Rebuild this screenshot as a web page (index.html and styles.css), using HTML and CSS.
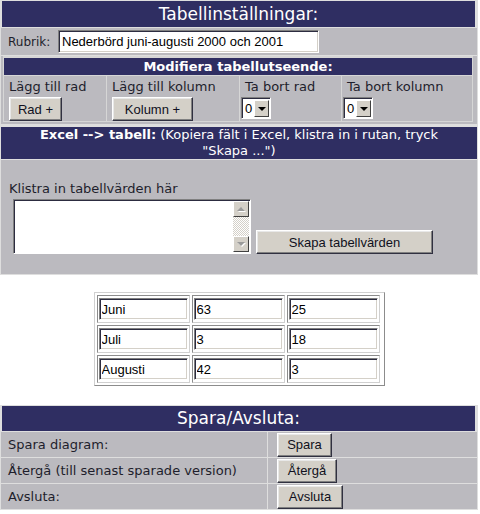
FILE: index.html
```html
<!DOCTYPE html>
<html lang="sv">
<head>
<meta charset="utf-8">
<title>Tabellinställningar</title>
<link rel="stylesheet" href="styles.css">
</head>
<body>
<div class="page">
  <div class="panel">
    <div class="bar bar-title">Tabellinställningar:</div>
    <div class="row row-rubrik">
      <span class="lbl-small">Rubrik:</span>
      <input class="txt txt-rubrik" type="text" value="Nederbörd juni-augusti 2000 och 2001">
    </div>
    <div class="row row-mod">
      <div class="mod">
        <div class="bar bar-sub">Modifiera tabellutseende:</div>
        <div class="mod-cells">
          <div class="mcell c1">
            <div class="mlabel">Lägg till rad</div>
            <button class="btn btn-rad">Rad +</button>
          </div>
          <div class="mcell c2">
            <div class="mlabel">Lägg till kolumn</div>
            <button class="btn btn-kol">Kolumn +</button>
          </div>
          <div class="mcell c3">
            <div class="mlabel ind">Ta bort rad</div>
            <span class="sel"><span class="sel-val">0</span><span class="sel-btn"><span class="tri"></span></span></span>
          </div>
          <div class="mcell c4">
            <div class="mlabel ind">Ta bort kolumn</div>
            <span class="sel"><span class="sel-val">0</span><span class="sel-btn"><span class="tri"></span></span></span>
          </div>
        </div>
      </div>
    </div>
    <div class="bar bar-excel"><b>Excel --&gt; tabell:</b> (Kopiera fält i Excel, klistra in i rutan, tryck "Skapa ...")</div>
    <div class="row row-paste">
      <div class="paste-label">Klistra in tabellvärden här</div>
      <div class="paste-line">
        <div class="ta">
          <textarea class="ta-area"></textarea>
          <div class="sb">
            <span class="sb-btn"><span class="tri-up"></span></span>
            <span class="sb-track"></span>
            <span class="sb-btn"><span class="tri-down"></span></span>
          </div>
        </div>
        <button class="btn btn-skapa">Skapa tabellvärden</button>
      </div>
    </div>
  </div>

  <div class="data">
    <div class="dcell"><input class="txt dtxt" type="text" value="Juni"></div>
    <div class="dcell"><input class="txt dtxt" type="text" value="63"></div>
    <div class="dcell"><input class="txt dtxt" type="text" value="25"></div>
    <div class="dcell"><input class="txt dtxt" type="text" value="Juli"></div>
    <div class="dcell"><input class="txt dtxt" type="text" value="3"></div>
    <div class="dcell"><input class="txt dtxt" type="text" value="18"></div>
    <div class="dcell"><input class="txt dtxt" type="text" value="Augusti"></div>
    <div class="dcell"><input class="txt dtxt" type="text" value="42"></div>
    <div class="dcell"><input class="txt dtxt" type="text" value="3"></div>
  </div>

  <div class="panel panel-save">
    <div class="bar bar-title bar-save">Spara/Avsluta:</div>
    <div class="save-grid">
      <div class="scell">Spara diagram:</div>
      <div class="scell sbtn"><button class="btn btn-spara">Spara</button></div>
      <div class="scell">Återgå (till senast sparade version)</div>
      <div class="scell sbtn"><button class="btn btn-atergå">Återgå</button></div>
      <div class="scell">Avsluta:</div>
      <div class="scell sbtn"><button class="btn btn-avsluta">Avsluta</button></div>
    </div>
  </div>
</div>
</body>
</html>
```

FILE: styles.css
```css
html, body {
  margin: 0;
  padding: 0;
  background: #ffffff;
}
body {
  font-family: "DejaVu Sans", Verdana, sans-serif;
  font-size: 13px;
  color: #1e1e2c;
}
.page {
  width: 478px;
}
.panel {
  background: #dedede;
  padding: 1px;
  display: flex;
  flex-direction: column;
  gap: 1px;
}
.bar {
  background: #2f2e62;
  color: #ffffff;
  text-align: center;
}
.bar-title {
  height: 26px;
  line-height: 26px;
  font-size: 17px;
  margin: 0 2px 0 1px;
}
.row {
  background: #bbbabf;
}
.row-rubrik {
  height: 27px;
  display: flex;
  align-items: center;
  padding-left: 7px;
}
.lbl-small {
  font-size: 12px;
  width: 50px;
}
.txt {
  font-family: "Liberation Sans", Arial, sans-serif;
  font-size: 13px;
  color: #000;
  background: #fff;
  box-sizing: border-box;
  border: 1px solid;
  border-color: #808080 #ffffff #ffffff #808080;
  box-shadow: inset 1px 1px #2c2c40, inset -1px -1px #d4d0c8;
  padding: 0 3px;
  margin: 0;
  outline: none;
}
.txt-rubrik {
  width: 261px;
  height: 23px;
}
.row-mod {
  padding: 0 2px 2px 2px;
}
.mod {
  background: #d6d6d6;
  padding: 2px 1px 1px 1px;
  display: flex;
  flex-direction: column;
  gap: 1px;
  width: 470px;
  box-sizing: border-box;
}
.bar-sub {
  height: 17px;
  line-height: 17px;
  font-weight: bold;
  font-size: 13px;
}
.mod-cells {
  display: grid;
  grid-template-columns: 102px 132px 101px 130px;
  gap: 1px;
}
.mcell {
  background: #bbbabf;
  height: 45px;
  padding-left: 5px;
  box-sizing: border-box;
}
.c3, .c4 {
  padding-left: 1px;
}
.mlabel {
  height: 20px;
  line-height: 22px;
  margin-bottom: 1px;
}
.mlabel.ind {
  padding-left: 4px;
}
.btn {
  font-family: "Liberation Sans", Arial, sans-serif;
  font-size: 13px;
  color: #101020;
  background: #d4d0c8;
  box-sizing: border-box;
  height: 24px;
  padding: 0;
  margin: 0;
  border: 1px solid;
  border-color: #ffffff #303040 #303040 #ffffff;
  box-shadow: inset -1px -1px #808080, inset 1px 1px #e8e8e8;
  border-radius: 0;
}
.btn-rad { width: 53px; }
.btn-kol { width: 81px; }
.sel {
  display: inline-flex;
  box-sizing: border-box;
  width: 30px;
  height: 22px;
  background: #fff;
  border: 1px solid;
  border-color: #808080 #ffffff #ffffff #808080;
  box-shadow: inset 1px 1px #2c2c40;
  padding: 2px 1px 1px 2px;
  font-family: "Liberation Sans", Arial, sans-serif;
  font-size: 13px;
  color: #000;
}
.sel-val {
  flex: 1;
  line-height: 17px;
  padding-left: 1px;
}
.sel-btn {
  width: 15px;
  height: 17px;
  box-sizing: border-box;
  background: #d4d0c8;
  border: 1px solid;
  border-color: #ffffff #404040 #404040 #ffffff;
  display: flex;
  align-items: center;
  justify-content: center;
}
.tri {
  width: 0;
  height: 0;
  border-left: 4px solid transparent;
  border-right: 4px solid transparent;
  border-top: 4px solid #000;
}
.bar-excel {
  margin-top: 2px;
  height: 32px;
  line-height: 16px;
  font-size: 13px;
  padding: 0 22px;
}
.row-paste {
  height: 114px;
  padding: 21px 0 0 8px;
  box-sizing: border-box;
}
.paste-label {
  line-height: 16px;
  height: 17px;
  margin-bottom: 1px;
}
.paste-line {
  display: flex;
  align-items: flex-end;
  gap: 5px;
  padding-left: 4px;
}
.ta {
  display: flex;
  box-sizing: border-box;
  width: 238px;
  height: 55px;
  background: #fff;
  border: 1px solid;
  border-color: #808080 #ffffff #ffffff #808080;
  box-shadow: inset 1px 1px #2c2c40;
  padding: 1px 1px 1px 1px;
}
.ta-area {
  flex: 1;
  border: 0;
  margin: 0;
  padding: 0;
  resize: none;
  outline: none;
  background: #fff;
}
.sb {
  width: 16px;
  display: flex;
  flex-direction: column;
}
.sb-btn {
  height: 16px;
  box-sizing: border-box;
  background: #d4d0c8;
  border: 1px solid;
  border-color: #ffffff #404040 #404040 #ffffff;
  display: flex;
  align-items: center;
  justify-content: center;
}
.sb-track {
  flex: 1;
  background: repeating-conic-gradient(#ffffff 0 25%, #d4d0c8 0 50%) 0 0 / 2px 2px;
}
.tri-up {
  width: 0;
  height: 0;
  border-left: 4px solid transparent;
  border-right: 4px solid transparent;
  border-bottom: 4px solid #9a9a9a;
  filter: drop-shadow(1px 1px 0 #fff);
}
.tri-down {
  width: 0;
  height: 0;
  border-left: 4px solid transparent;
  border-right: 4px solid transparent;
  border-top: 4px solid #9a9a9a;
  filter: drop-shadow(1px 1px 0 #fff);
}
.btn-skapa {
  width: 177px;
  margin-bottom: 0;
}
.data {
  margin: 17px auto 0 auto;
  width: 291px;
  box-sizing: border-box;
  border: 1px solid;
  border-color: #d0d0d0 #8c8c8c #8c8c8c #d0d0d0;
  padding: 2px;
  display: grid;
  grid-template-columns: repeat(3, 93px);
  gap: 2px;
}
.dcell {
  border: 1px solid;
  border-color: #8c8c8c #d0d0d0 #d0d0d0 #8c8c8c;
  padding: 2px 1px;
  height: 28px;
  box-sizing: border-box;
}
.dtxt {
  width: 89px;
  height: 22px;
  padding-left: 2px;
}
.panel-save {
  margin-top: 19px;
}
.bar-save {
  height: 25px;
  line-height: 25px;
}
.save-grid {
  display: grid;
  grid-template-columns: 266px 1fr;
  gap: 1px;
}
.scell {
  background: #bbbabf;
  height: 25px;
  line-height: 25px;
  padding-left: 7px;
  box-sizing: border-box;
}
.sbtn {
  padding-left: 9px;
  display: flex;
  align-items: center;
}
.btn-spara { width: 55px; }
.btn-atergå { width: 60px; }
.btn-avsluta { width: 66px; }
```
